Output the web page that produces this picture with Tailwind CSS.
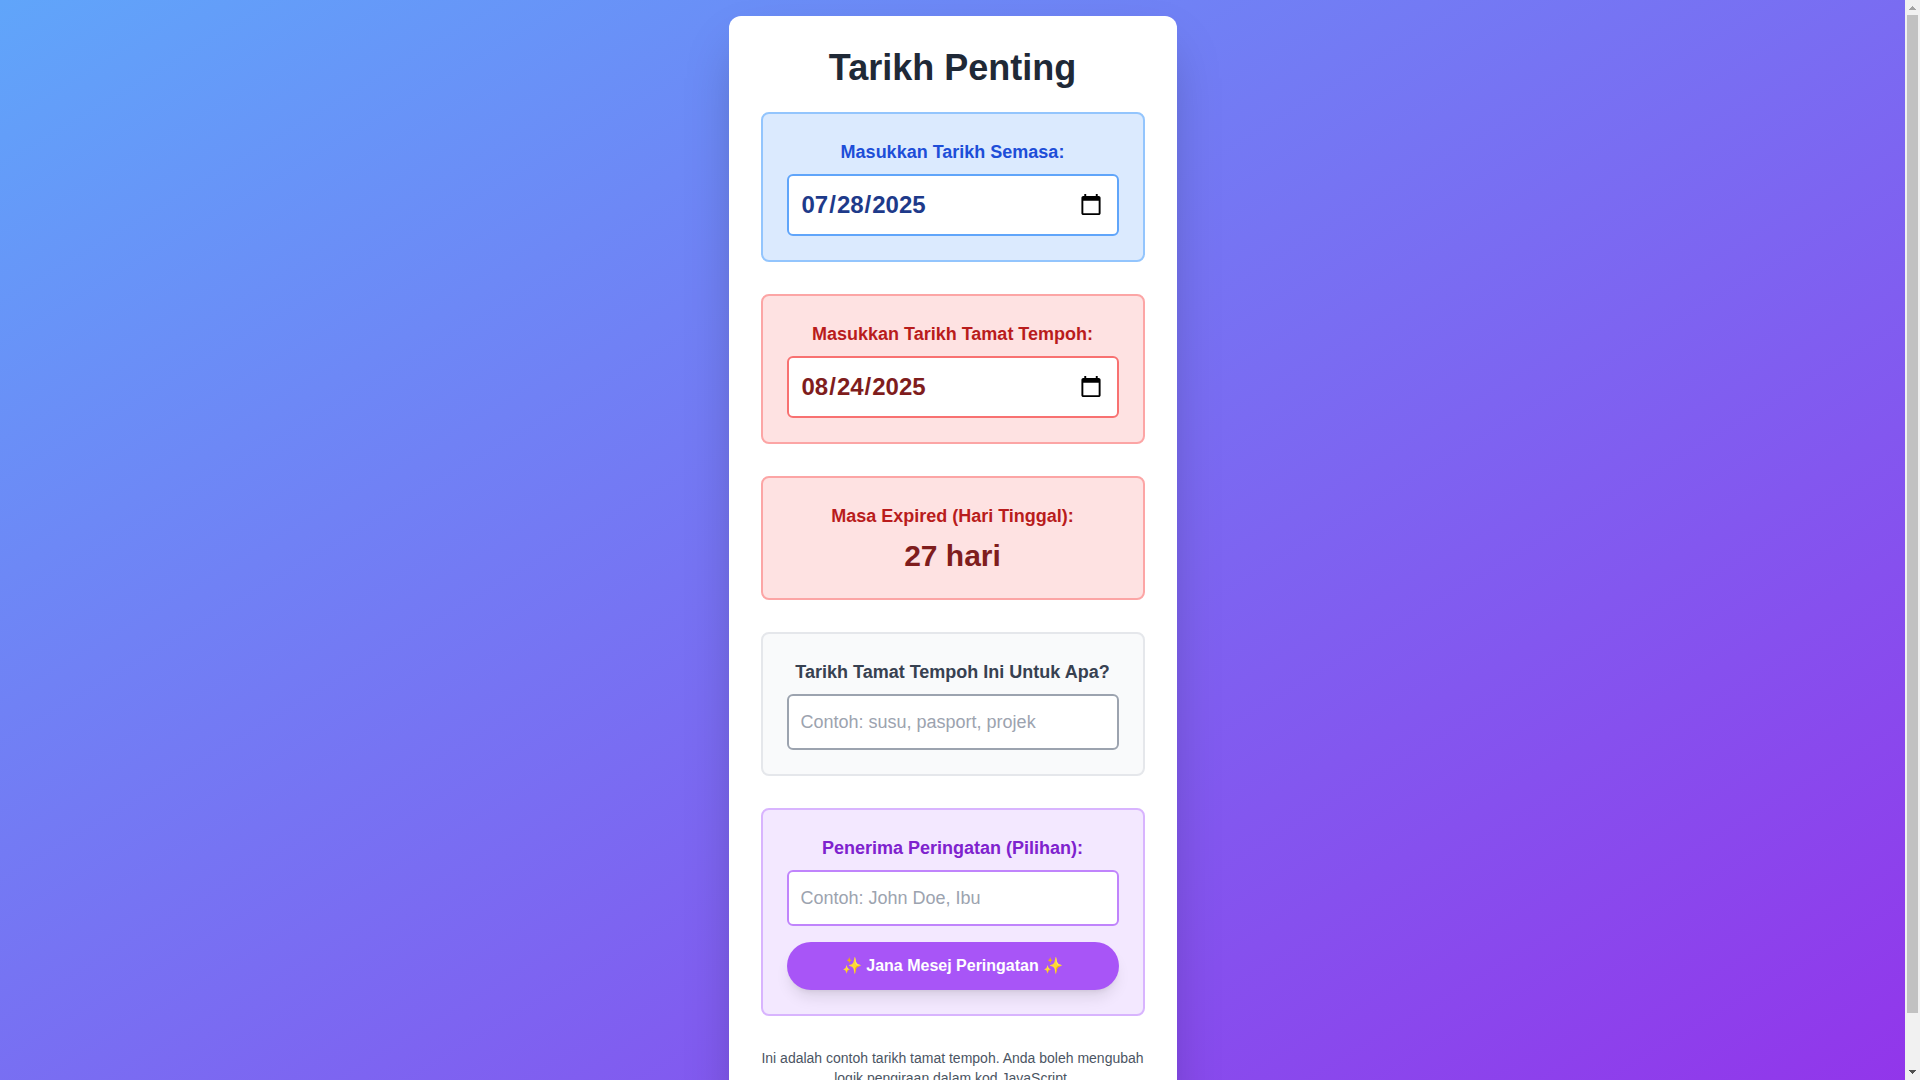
<!DOCTYPE html>
<html lang="ms">
<head>
    <meta charset="UTF-8">
    <meta name="viewport" content="width=device-width, initial-scale=1.0">
    <title>Tarikh Penting</title>
    <script src="https://cdn.jsdelivr.net/npm/@tailwindcss/browser@4"></script>
    <style>
        html {
            scrollbar-width: none;
        }
        body {
            font-family: "Liberation Sans", Arial, sans-serif;
        }
    </style>
</head>
<body class="pr-[15px]">
    <main class="bg-linear-to-br/srgb from-[#60a5fa] to-[#9333ea] min-h-screen flex items-center justify-center p-4">
        <div class="bg-white p-8 rounded-xl shadow-2xl w-full max-w-md text-center">
            <h1 class="text-4xl font-extrabold text-[#1f2937] mb-6">Tarikh Penting</h1>

            <!-- Tarikh semasa -->
            <div class="bg-[#dbeafe] border-2 border-[#93c5fd] rounded-lg p-6 mb-8">
                <label for="current-date" class="block text-lg font-semibold text-[#1d4ed8] mb-2">Masukkan Tarikh Semasa:</label>
                <input type="date" id="current-date" value="2025-07-28" class="block w-full px-3 py-[13px] bg-white border-2 border-[#60a5fa] rounded-md text-2xl font-bold text-[#1e3a8a]">
            </div>

            <!-- Tarikh tamat tempoh -->
            <div class="bg-[#fee2e2] border-2 border-[#fca5a5] rounded-lg p-6 mb-8">
                <label for="expiry-date" class="block text-lg font-semibold text-[#b91c1c] mb-2">Masukkan Tarikh Tamat Tempoh:</label>
                <input type="date" id="expiry-date" value="2025-08-24" class="block w-full px-3 py-[13px] bg-white border-2 border-[#f87171] rounded-md text-2xl font-bold text-[#7f1d1d]">
            </div>

            <!-- Hari tinggal -->
            <div class="bg-[#fee2e2] border-2 border-[#fca5a5] rounded-lg p-6 mb-8">
                <p class="text-lg font-semibold text-[#b91c1c] mb-2">Masa Expired (Hari Tinggal):</p>
                <p id="days-left" class="text-3xl font-bold text-[#7f1d1d]">27 hari</p>
            </div>

            <div class="bg-[#f9fafb] border-2 border-[#e5e7eb] rounded-lg p-6 mb-8">
                <label for="purpose" class="block text-lg font-semibold text-[#374151] mb-2">Tarikh Tamat Tempoh Ini Untuk Apa?</label>
                <input type="text" id="purpose" placeholder="Contoh: susu, pasport, projek" class="block w-full p-3 bg-white border-2 border-[#9ca3af] rounded-md text-lg text-[#1f2937] placeholder:text-[#9ca3af]">
            </div>

            <!-- Penerima dan butang jana mesej -->
            <div class="bg-[#f3e8ff] border-2 border-[#d8b4fe] rounded-lg p-6 mb-8">
                <label for="recipient" class="block text-lg font-semibold text-[#7e22ce] mb-2">Penerima Peringatan (Pilihan):</label>
                <input type="text" id="recipient" placeholder="Contoh: John Doe, Ibu" class="block w-full p-3 mb-4 bg-white border-2 border-[#c084fc] rounded-md text-lg text-[#581c87] placeholder:text-[#9ca3af]">
                <button type="button" id="generate" class="block w-full py-3 px-6 bg-[#a855f7] hover:bg-[#9333ea] text-white font-bold rounded-full shadow-lg transition">✨ Jana Mesej Peringatan ✨</button>
                <p id="message" class="hidden mt-4 text-[#581c87]"></p>
            </div>

            <p class="text-sm text-[#4b5563]">Ini adalah contoh tarikh tamat tempoh. Anda boleh mengubah logik pengiraan dalam kod JavaScript.</p>
        </div>
    </main>

    <!-- Bar skrol -->
    <div class="fixed inset-y-0 right-0 w-[15px] bg-[#f1f1f1] flex flex-col" aria-hidden="true">
        <svg class="w-[15px] h-[15px] shrink-0" viewBox="0 0 15 15" fill="#a3a3a3" shape-rendering="crispEdges"><path d="M7 6h1v1h1v1h1v1h1v1H4V9h1V8h1V7h1z"/></svg>
        <div class="flex-1 min-h-0 px-[2px]">
            <div id="thumb" class="relative bg-[#c1c1c1]"></div>
        </div>
        <svg class="w-[15px] h-[15px] shrink-0" viewBox="0 0 15 15" fill="#505050" shape-rendering="crispEdges"><path d="M4 5h7v1h-1v1H9v1H8v1H7V8H6V7H5V6H4z"/></svg>
    </div>

    <script>
        const currentDate = document.getElementById("current-date");
        const expiryDate = document.getElementById("expiry-date");
        const daysLeft = document.getElementById("days-left");
        const thumb = document.getElementById("thumb");

        function updateDays() {
            const diff = Math.round((new Date(expiryDate.value) - new Date(currentDate.value)) / 86400000);
            if (isNaN(diff)) {
                daysLeft.textContent = "-";
                return;
            }
            daysLeft.textContent = diff < 0 ? "Tamat tempoh" : diff + " hari";
        }

        function updateThumb() {
            const total = document.documentElement.scrollHeight;
            const track = thumb.parentElement.clientHeight;
            thumb.style.height = Math.round(track * window.innerHeight / total) + "px";
            thumb.style.top = Math.round(track * window.scrollY / total) + "px";
        }

        currentDate.addEventListener("change", updateDays);
        expiryDate.addEventListener("change", updateDays);
        window.addEventListener("scroll", updateThumb);
        window.addEventListener("resize", updateThumb);
        window.addEventListener("load", updateThumb);

        document.getElementById("generate").addEventListener("click", function() {
            const name = document.getElementById("recipient").value.trim() || "semua";
            const purpose = document.getElementById("purpose").value.trim() || "perkara ini";
            const message = document.getElementById("message");
            message.textContent = "Hai " + name + ", tempoh " + purpose + ": " + daysLeft.textContent + ".";
            message.classList.remove("hidden");
            updateThumb();
        });

        updateDays();
        updateThumb();
    </script>
</body>
</html>
